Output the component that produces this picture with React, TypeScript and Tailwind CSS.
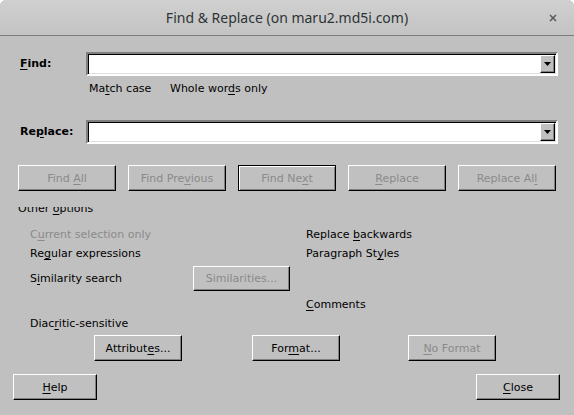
import React from "react";

// mnemonic letter, underlined like the native dialog
const M: React.FC<{ children: React.ReactNode }> = ({ children }) => (
  <span className="underline decoration-1 underline-offset-[2px]">{children}</span>
);

type BtnProps = {
  children: React.ReactNode;
  w: string;
  h?: string;
  disabled?: boolean;
  isDefault?: boolean;
  className?: string;
};

const Btn: React.FC<BtnProps> = ({ children, w, h = "h-[26px]", disabled, isDefault, className = "" }) => (
  <div
    className={`flex shrink-0 items-center justify-center border bg-[#c0c0c0] leading-[13px] ${w} ${h} ${
      isDefault
        ? "border-black shadow-[inset_1px_1px_0_#ffffff,inset_-1px_-1px_0_#808080]"
        : "border-t-white border-l-white border-r-black border-b-black shadow-[inset_-1px_-1px_0_#808080]"
    } ${disabled ? "text-[#8a8a8a]" : "text-black"} ${className}`}
  >
    <span>{children}</span>
  </div>
);

const Combo: React.FC = () => (
  <div className="flex h-[24px] w-[472px] border-2 border-t-[#808080] border-l-[#808080] border-r-white border-b-white bg-white shadow-[inset_1px_1px_0_#000000,inset_-1px_-1px_0_#dfdfdf]">
    <div className="grow" />
    <div className="mt-px mb-px mr-px flex w-[15px] items-center justify-center border border-t-white border-l-white border-r-black border-b-black bg-[#c0c0c0] shadow-[inset_-1px_-1px_0_#808080]">
      <svg width="7" height="4" viewBox="0 0 7 4">
        <polygon points="0,0 7,0 3.5,4" fill="#000" />
      </svg>
    </div>
  </div>
);

export default function App() {
  return (
    <div className="h-[415px] w-[574px] bg-white font-['DejaVu_Sans',sans-serif] text-[11px] text-black">
      <div className="flex h-full flex-col overflow-hidden rounded-t-[6px] bg-[#c0c0c0]">
        {/* title bar */}
        <div className="grid h-[36px] shrink-0 grid-cols-[48px_1fr_48px] items-center border-b border-[#7c7c7c] bg-gradient-to-b from-[#d0d0d0] to-[#c3c3c3]">
          <div />
          <div className="text-center font-['Noto_Sans',sans-serif] text-[14px] text-[#2e3436]">
            Find &amp; Replace (on maru2.md5i.com)
          </div>
          <div className="flex justify-end pr-[17px]">
            <svg width="8" height="8" viewBox="0 0 8 8">
              <path d="M1 1 L7 7 M7 1 L1 7" stroke="#5c5c5c" strokeWidth="1.6" />
            </svg>
          </div>
        </div>

        {/* find */}
        <div className="mt-[16px] flex items-center">
          <div className="w-[86px] pl-[20px] font-bold">
            <M>F</M>ind:
          </div>
          <Combo />
        </div>
        <div className="mt-[6px] ml-[89px] flex leading-[13px]">
          <span className="w-[81px]">
            Ma<M>t</M>ch case
          </span>
          <span>
            Whole wor<M>d</M>s only
          </span>
        </div>

        {/* replace */}
        <div className="mt-[25px] flex items-center">
          <div className="w-[86px] pl-[20px] font-bold">
            Re<M>p</M>lace:
          </div>
          <Combo />
        </div>

        {/* action buttons */}
        <div className="mt-[21px] ml-[18px] flex gap-[12px]">
          <Btn w="w-[98px]" disabled>
            Find <M>A</M>ll
          </Btn>
          <Btn w="w-[98px]" disabled>
            Find Pre<M>v</M>ious
          </Btn>
          <Btn w="w-[98px]" disabled isDefault>
            Find Ne<M>x</M>t
          </Btn>
          <Btn w="w-[98px]" disabled>
            <M>R</M>eplace
          </Btn>
          <Btn w="w-[98px]" disabled>
            Replace Al<M>l</M>
          </Btn>
        </div>

        {/* expander label, cut off at the top as in the dialog */}
        <div className="mt-[16px] ml-[18px] h-[8px] overflow-hidden">
          <div className="mt-[-5px] leading-[13px]">
            Other <M>o</M>ptions
          </div>
        </div>

        {/* other options */}
        <div className="mt-[13px] ml-[30px] flex flex-col leading-[13px]">
          <div className="flex h-[19px]">
            <span className="w-[276px] text-[#8a8a8a]">
              C<M>u</M>rrent selection only
            </span>
            <span>
              Replace <M>b</M>ackwards
            </span>
          </div>
          <div className="flex h-[19px]">
            <span className="w-[276px]">
              Re<M>g</M>ular expressions
            </span>
            <span>
              Paragraph St<M>y</M>les
            </span>
          </div>
          <div className="flex h-[25px] items-center">
            <span className="w-[163px]">
              S<M>i</M>milarity search
            </span>
            <Btn w="w-[97px]" h="h-[25px]" disabled>
              Similarities...
            </Btn>
          </div>
          <div className="mt-[7px] flex h-[19px]">
            <span className="w-[276px]" />
            <span>
              <M>C</M>omments
            </span>
          </div>
          <div className="flex h-[13px]">
            <span>
              Diac<M>r</M>itic-sensitive
            </span>
          </div>
        </div>

        {/* attribute buttons */}
        <div className="mt-[5px] ml-[94px] flex">
          <Btn w="w-[88px]">
            Attribut<M>e</M>s...
          </Btn>
          <Btn w="w-[88px]" className="ml-[70px]">
            For<M>m</M>at...
          </Btn>
          <Btn w="w-[88px]" className="ml-[68px]" disabled>
            <M>N</M>o Format
          </Btn>
        </div>

        {/* footer */}
        <div className="mt-[13px] flex justify-between pl-[13px] pr-[14px]">
          <Btn w="w-[84px]">
            <M>H</M>elp
          </Btn>
          <Btn w="w-[84px]">
            <M>C</M>lose
          </Btn>
        </div>
      </div>
    </div>
  );
}
